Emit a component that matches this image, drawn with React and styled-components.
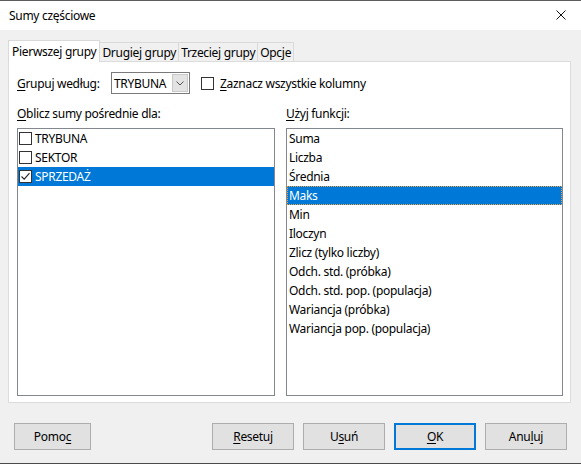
import React from 'react'
import styled, { createGlobalStyle } from 'styled-components'

const GlobalStyle = createGlobalStyle`
  html, body {
    margin: 0;
    padding: 0;
    background: #ffffff;
  }
  body {
    font-family: "Noto Sans", "Open Sans", sans-serif;
    font-size: 12px;
    letter-spacing: -0.3px;
    color: #000000;
  }
`

const Window = styled.div`
  width: 581px;
  height: 466px;
  display: flex;
  flex-direction: column;
  background: #ffffff;
  border-top: 1px solid #5c5c5c;
  box-sizing: border-box;
  overflow: hidden;
`

const TitleBar = styled.div`
  height: 29px;
  display: flex;
  align-items: center;
  justify-content: space-between;
  padding: 0 15px 0 9px;
  background: #ffffff;
  flex-shrink: 0;
`

const Title = styled.span`
  margin-top: -1px;
`

const CloseBtn = styled.div`
  width: 10px;
  height: 10px;
  display: flex;
  margin-top: -1px;
`

const Body = styled.div`
  height: 434px;
  flex-shrink: 0;
  background: #f0f0f0;
  display: flex;
  flex-direction: column;
  padding: 10px 10px 0 8px;
  box-sizing: border-box;
  border-bottom: 1px solid #4a4a4a;
`

const TabStrip = styled.div`
  display: flex;
  align-items: flex-end;
  height: 21px;
  position: relative;
  z-index: 1;
`

const Tab = styled.div`
  box-sizing: border-box;
  padding: 0 ${p => (p.$active ? '3px' : '2px')};
  padding-bottom: ${p => (p.$active ? '1px' : '0')};
  margin-left: ${p => (p.$first ? '0' : '-1px')};
  margin-bottom: ${p => (p.$active ? '-1px' : '0')};
  height: ${p => (p.$active ? '22px' : '19px')};
  border: 1px solid #d9d9d9;
  border-bottom: none;
  background: ${p => (p.$active ? '#ffffff' : '#f0f0f0')};
  display: flex;
  align-items: center;
  white-space: nowrap;
  position: relative;
  z-index: ${p => (p.$active ? 2 : 1)};
`

const Panel = styled.div`
  height: 342px;
  box-sizing: border-box;
  background: #ffffff;
  border: 1px solid #dcdcdc;
  padding: 10px 7px 6px 8px;
  display: flex;
  flex-direction: column;
`

const TopRow = styled.div`
  display: flex;
  align-items: center;
  height: 22px;
`

const Label = styled.span`
  white-space: nowrap;
  width: ${p => p.$width || 'auto'};
  flex-shrink: 0;
`

const U = styled.span`
  text-decoration: underline;
  text-underline-offset: 2px;
`

const Combo = styled.div`
  width: 79px;
  height: 22px;
  box-sizing: border-box;
  border: 1px solid #7a7a7a;
  display: flex;
  align-items: center;
  justify-content: space-between;
  padding: 0 1px 0 2px;
  background: #ffffff;
`

const ComboButton = styled.div`
  width: 16px;
  height: 18px;
  box-sizing: border-box;
  background: #e3e3e3;
  border: 1px solid #c9c9c9;
  display: flex;
  align-items: center;
  justify-content: center;
`

const CheckBox = styled.div`
  width: 13px;
  height: 13px;
  box-sizing: border-box;
  border: 1px solid #333333;
  background: #ffffff;
  flex-shrink: 0;
  display: flex;
  align-items: center;
  justify-content: center;
`

const CheckLabel = styled.label`
  display: flex;
  align-items: center;
  gap: 6px;
  margin-left: 11px;
`

const Columns = styled.div`
  display: grid;
  grid-template-columns: 258px 277px;
  column-gap: 11px;
  margin-top: 12px;
  flex: 1;
  min-height: 0;
`

const Column = styled.div`
  display: flex;
  flex-direction: column;
  gap: 6px;
`

const ColLabel = styled.div`
  height: 16px;
  line-height: 16px;
  white-space: nowrap;
`

const ListBox = styled.div`
  height: 268px;
  box-sizing: border-box;
  border: 1px solid #828790;
  background: #ffffff;
  display: flex;
  flex-direction: column;
`

const Row = styled.div`
  height: 19px;
  flex-shrink: 0;
  display: flex;
  align-items: center;
  gap: 3px;
  padding-left: ${p => (p.$check ? '1px' : '2px')};
  background: ${p => (p.$selected ? '#0078d7' : 'transparent')};
  color: ${p => (p.$selected ? '#ffffff' : '#000000')};
  outline: ${p => (p.$focus ? '1px dotted #f2a33a' : 'none')};
  outline-offset: -1px;
  white-space: nowrap;
  box-sizing: border-box;
`

const ButtonRow = styled.div`
  display: flex;
  align-items: center;
  padding: 20px 4px 0 6px;
`

const Spacer = styled.div`
  flex: 1;
`

const Button = styled.div`
  width: ${p => p.$width || '82px'};
  height: 27px;
  box-sizing: border-box;
  margin-left: ${p => p.$gap || '0'};
  background: #e1e1e1;
  border: ${p => (p.$default ? '2px solid #0078d7' : '1px solid #adadad')};
  display: flex;
  align-items: center;
  justify-content: center;
  white-space: nowrap;
`

const Check = () => (
  <svg width="11" height="11" viewBox="0 0 11 11">
    <path d="M1.5 5.5 L4.2 8.2 L9.5 2.2" fill="none" stroke="#222" strokeWidth="1.1" />
  </svg>
)

const groups = [
  { name: 'TRYBUNA', checked: false },
  { name: 'SEKTOR', checked: false },
  { name: 'SPRZEDAŻ', checked: true, selected: true },
]

const functions = [
  'Suma',
  'Liczba',
  'Średnia',
  'Maks',
  'Min',
  'Iloczyn',
  'Zlicz (tylko liczby)',
  'Odch. std. (próbka)',
  'Odch. std. pop. (populacja)',
  'Wariancja (próbka)',
  'Wariancja pop. (populacja)',
]

const tabs = ['Pierwszej grupy', 'Drugiej grupy', 'Trzeciej grupy', 'Opcje']

export default function App() {
  return (
    <>
      <GlobalStyle />
      <Window>
        <TitleBar>
          <Title>Sumy częściowe</Title>
          <CloseBtn>
            <svg width="10" height="10" viewBox="0 0 10 10">
              <path d="M0.5 0.5 L9.5 9.5 M9.5 0.5 L0.5 9.5" stroke="#111" strokeWidth="1" />
            </svg>
          </CloseBtn>
        </TitleBar>
        <Body>
          <TabStrip>
            {tabs.map((t, i) => (
              <Tab key={t} $active={i === 0} $first={i === 0}>
                {t}
              </Tab>
            ))}
          </TabStrip>
          <Panel>
            <TopRow>
              <Label $width="94px">
                <U>G</U>rupuj według:
              </Label>
              <Combo>
                <span>TRYBUNA</span>
                <ComboButton>
                  <svg width="8" height="5" viewBox="0 0 8 5">
                    <path d="M0.5 0.5 L4 4 L7.5 0.5" fill="none" stroke="#555" strokeWidth="1" />
                  </svg>
                </ComboButton>
              </Combo>
              <CheckLabel>
                <CheckBox />
                <span>
                  <U>Z</U>aznacz wszystkie kolumny
                </span>
              </CheckLabel>
            </TopRow>
            <Columns>
              <Column>
                <ColLabel>
                  <U>O</U>blicz sumy pośrednie dla:
                </ColLabel>
                <ListBox>
                  {groups.map(g => (
                    <Row key={g.name} $check $selected={g.selected}>
                      <CheckBox>{g.checked && <Check />}</CheckBox>
                      <span>{g.name}</span>
                    </Row>
                  ))}
                </ListBox>
              </Column>
              <Column>
                <ColLabel>
                  <U>U</U>żyj funkcji:
                </ColLabel>
                <ListBox>
                  {functions.map(f => (
                    <Row key={f} $selected={f === 'Maks'} $focus={f === 'Maks'}>
                      {f}
                    </Row>
                  ))}
                </ListBox>
              </Column>
            </Columns>
          </Panel>
          <ButtonRow>
            <Button $width="77px">
              Pomo<U>c</U>
            </Button>
            <Spacer />
            <Button>
              <U>R</U>esetuj
            </Button>
            <Button $gap="9px">
              U<U>s</U>uń
            </Button>
            <Button $gap="9px" $default>
              <U>O</U>K
            </Button>
            <Button $gap="9px">
              Anu<U>l</U>uj
            </Button>
          </ButtonRow>
        </Body>
      </Window>
    </>
  )
}
